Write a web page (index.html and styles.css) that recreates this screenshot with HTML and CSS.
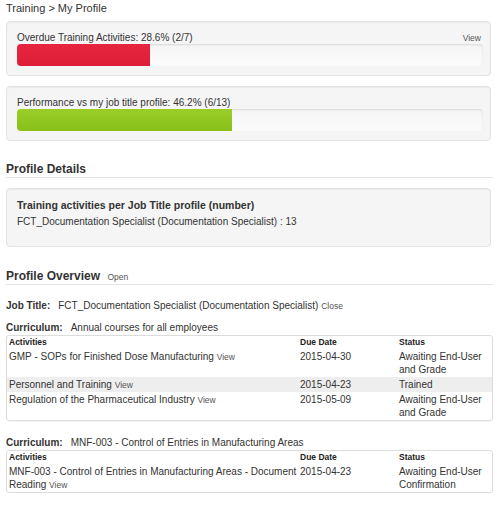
FILE: index.html
```html
<!DOCTYPE html>
<html>
<head>
<meta charset="utf-8">
<link rel="stylesheet" href="styles.css">
</head>
<body>
<div class="page">
  <div class="crumb">Training &gt; My Profile</div>

  <div class="well stat first">
    <div class="stat-head">
      <span>Overdue Training Activities: 28.6% (2/7)</span>
      <a class="link">View</a>
    </div>
    <div class="progress"><div class="bar bar-red" style="width:28.6%"></div></div>
  </div>

  <div class="well stat second">
    <div class="stat-head">
      <span>Performance vs my job title profile: 46.2% (6/13)</span>
    </div>
    <div class="progress"><div class="bar bar-green" style="width:46.2%"></div></div>
  </div>

  <h2 class="section details-h">Profile Details</h2>
  <div class="well details">
    <div class="details-title">Training activities per Job Title profile (number)</div>
    <div class="details-line">FCT_Documentation Specialist (Documentation Specialist) : 13</div>
  </div>

  <h2 class="section overview-h">Profile Overview <a class="link small-link">Open</a></h2>

  <div class="jobtitle"><span class="label">Job Title:</span>FCT_Documentation Specialist (Documentation Specialist) <a class="link">Close</a></div>

  <div class="curriculum"><span class="label">Curriculum:</span>Annual courses for all employees</div>
  <table class="grid">
    <colgroup><col class="c1"><col class="c2"><col class="c3"></colgroup>
    <thead>
      <tr><th>Activities</th><th>Due Date</th><th>Status</th></tr>
    </thead>
    <tbody>
      <tr><td>GMP - SOPs for Finished Dose Manufacturing <a class="link">View</a></td><td>2015-04-30</td><td>Awaiting End-User and Grade</td></tr>
      <tr class="alt"><td>Personnel and Training <a class="link">View</a></td><td>2015-04-23</td><td>Trained</td></tr>
      <tr><td>Regulation of the Pharmaceutical Industry <a class="link">View</a></td><td>2015-05-09</td><td>Awaiting End-User and Grade</td></tr>
    </tbody>
  </table>

  <div class="curriculum second-cur"><span class="label">Curriculum:</span>MNF-003 - Control of Entries in Manufacturing Areas</div>
  <table class="grid">
    <colgroup><col class="c1"><col class="c2"><col class="c3"></colgroup>
    <thead>
      <tr><th>Activities</th><th>Due Date</th><th>Status</th></tr>
    </thead>
    <tbody>
      <tr><td>MNF-003 - Control of Entries in Manufacturing Areas - Document Reading <a class="link">View</a></td><td>2015-04-23</td><td>Awaiting End-User Confirmation</td></tr>
    </tbody>
  </table>
</div>
</body>
</html>
```

FILE: styles.css
```css
* { box-sizing: border-box; }
html, body { margin: 0; padding: 0; background: #fff; }
body {
  font-family: "Liberation Sans", Arial, sans-serif;
  font-size: 10px;
  color: #333;
}
.page {
  padding: 0 7px 0 6px;
}
.crumb {
  font-size: 11px;
  line-height: 14px;
  margin-top: 1px;
  color: #333;
}
.link {
  font-size: 8.5px;
  line-height: 1;
  color: #555;
  text-decoration: none;
}
.well {
  width: 485px;
  background: #f5f5f5;
  border: 1px solid #e3e3e3;
  border-radius: 4px;
  box-shadow: inset 0 1px 1px rgba(0,0,0,0.05);
}
.stat {
  padding: 9px 7px 9px 10px;
}
.stat.first { margin-top: 6px; }
.stat.second { margin-top: 10px; }
.stat-head {
  display: flex;
  justify-content: space-between;
  align-items: baseline;
  line-height: 13px;
}
.stat-head .link { margin-right: 2px; }
.progress {
  height: 22px;
  background: linear-gradient(#f5f5f5, #fbfbfb);
  border-radius: 4px;
  box-shadow: inset 0 1px 2px rgba(0,0,0,0.12);
  overflow: hidden;
}
.bar { height: 100%; }
.bar-red { background: linear-gradient(#e6253e, #de1e36); }
.bar-green { background: linear-gradient(#9acd27, #88c019); }

.section {
  margin: 0;
  font-size: 12px;
  font-weight: bold;
  line-height: 15px;
  color: #333;
  border-bottom: 1px solid #e5e5e5;
}
.details-h {
  margin-top: 21px;
}
.details {
  margin-top: 10px;
  padding: 9px 10px 17px 10px;
}
.details-title {
  font-size: 10.5px;
  font-weight: bold;
  line-height: 14px;
}
.details-line {
  line-height: 14px;
  margin-top: 3px;
}
.overview-h {
  margin-top: 21px;
  padding-top: 1px;
}
.small-link {
  font-weight: normal;
  margin-left: 4px;
}
.label {
  font-weight: bold;
  margin-right: 8px;
}
.jobtitle {
  margin-top: 14px;
  line-height: 14px;
}
.curriculum {
  margin-top: 8px;
  line-height: 14px;
}
.second-cur { margin-top: 15px; }

.grid {
  width: 487px;
  table-layout: fixed;
  border-collapse: separate;
  border-spacing: 0;
  border: 1px solid #dcdcdc;
  border-radius: 3px;
  box-shadow: 0 1px 1px rgba(0,0,0,0.04);
}
.c1 { width: 291px; }
.c2 { width: 99px; }
.c3 { width: 95px; }
.grid th {
  text-align: left;
  font-size: 8.5px;
  font-weight: bold;
  line-height: 11px;
  padding: 1px 0 1px 2px;
  color: #222;
}
.grid td {
  vertical-align: top;
  line-height: 13px;
  padding: 1px 0 1px 2px;
}
.grid tr.alt td { background: #eeeeee; }
```
